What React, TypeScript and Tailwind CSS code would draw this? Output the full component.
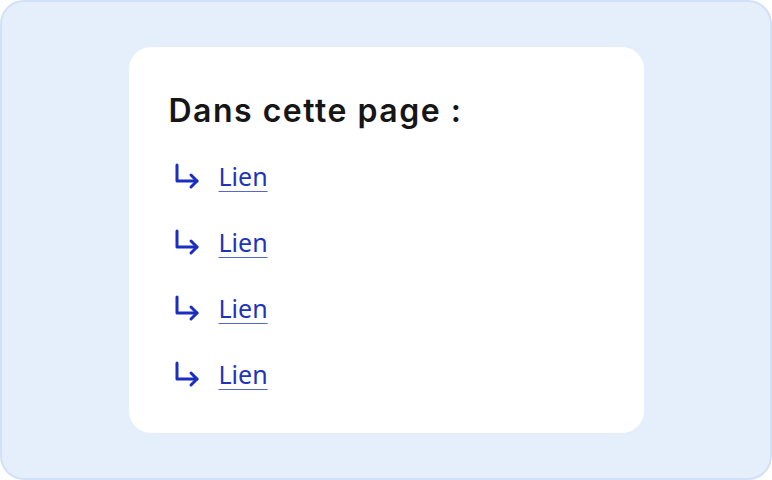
export default function App() {
  const links = ['Lien', 'Lien', 'Lien', 'Lien'];

  return (
    <div className="w-[772px] h-[480px] flex items-center justify-center bg-[#e5effb] border-2 border-[#d0e1f8] rounded-[24px]">
      <div className="w-[515px] h-[386px] bg-white rounded-[22px] pl-10 pt-[44px]">
        <h2 className="text-[32px] leading-[40px] font-semibold text-[#161616] font-['Inter',sans-serif] tracking-[1.5px]">
          Dans cette page :
        </h2>
        <ul className="mt-[27px] flex flex-col gap-[30px]">
          {links.map((label, i) => (
            <li key={i} className="flex items-center h-[36px]">
              <svg className="w-[28px] h-[28px] ml-[3px]" viewBox="0 0 28 28" fill="none" stroke="#1a2ec0" strokeWidth={3} strokeLinecap="round" strokeLinejoin="round">
                <path d="M5 3v16h20" />
                <path d="M19 13l6 6-6 6" />
              </svg>
              <a href="#" className="ml-[19px] text-[25px] leading-none text-[#2233bb] underline underline-offset-[5px] decoration-[1px] decoration-[#5566cc] font-['Noto_Sans',sans-serif]">
                {label}
              </a>
            </li>
          ))}
        </ul>
      </div>
    </div>
  );
}
